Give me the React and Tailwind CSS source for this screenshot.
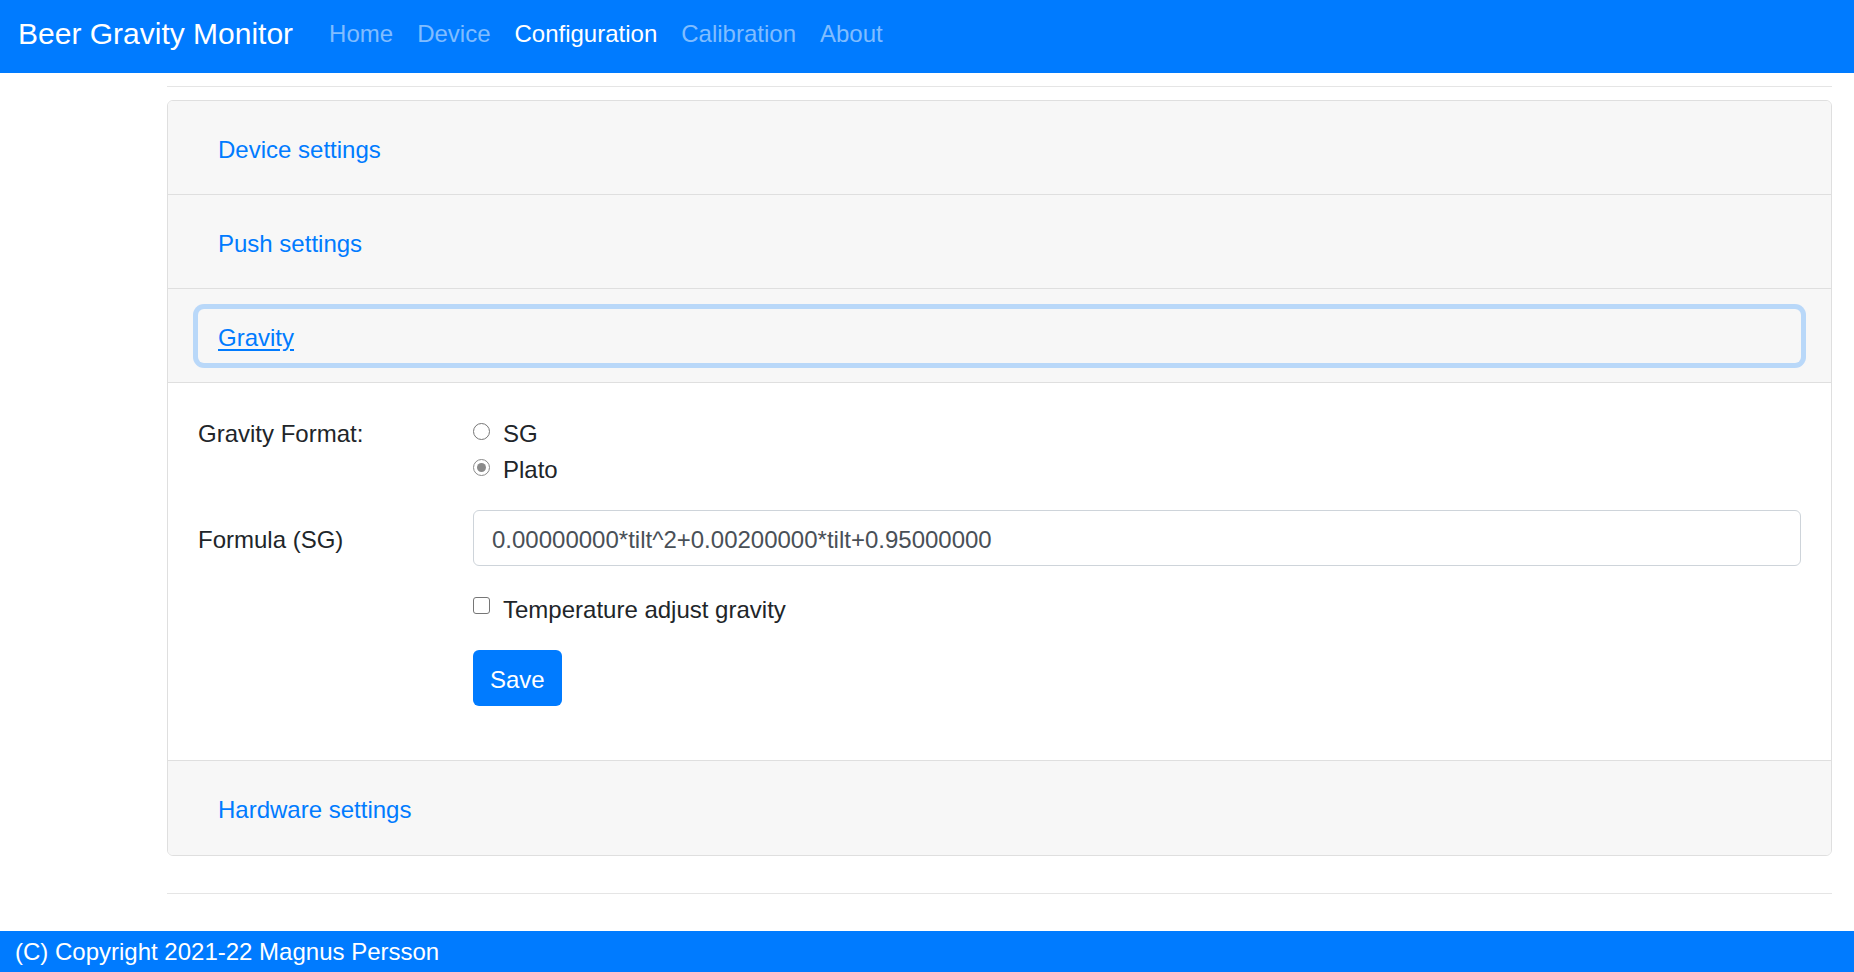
import { useState } from "react";

const SectionHeader = ({ title, active, onClick }) => {
    return (
        <div className="h-[94px] border-b border-[#dfdfdf] bg-[#f7f7f7] px-[30px] flex items-center">
            <button
                className={
                    active
                        ? "w-full h-[54px] pl-[20px] pr-[18px] pt-[4px] text-left text-[24px] leading-[36px] text-[#007bff] underline underline-offset-[3px] rounded-[6px] shadow-[0_0_0_5px_rgba(0,123,255,0.25)]"
                        : "w-full h-[54px] pl-[20px] pr-[18px] pt-[4px] text-left text-[24px] leading-[36px] text-[#007bff] rounded-[6px]"
                }
                onClick={onClick}
            >
                {title}
            </button>
        </div>
    );
};

const Radio = ({ checked, label, onClick }) => {
    return (
        <div className="flex items-center h-[36px] cursor-pointer" onClick={onClick}>
            <span
                className={
                    checked
                        ? "w-[17px] h-[17px] rounded-full border-[1.5px] border-[#8a8a8a] bg-white flex items-center justify-center -mt-[2px]"
                        : "w-[17px] h-[17px] rounded-full border border-[#767676] bg-white -mt-[2px]"
                }
            >
                {checked && <span className="w-[9px] h-[9px] rounded-full bg-[#8a8a8a]" />}
            </span>
            <span className="ml-[13px] translate-y-[2px]">{label}</span>
        </div>
    );
};

const App = () => {
    const [format, setFormat] = useState("Plato");
    const [tempAdjust, setTempAdjust] = useState(false);
    const [formula, setFormula] = useState("0.00000000*tilt^2+0.00200000*tilt+0.95000000");

    return (
        <div className="min-h-screen flex flex-col bg-white text-[#212529] font-['Liberation_Sans',Arial,sans-serif]">
            {/* Navbar */}
            <nav className="h-[73px] bg-[#007bff] flex items-center pl-[18px]">
                <span className="text-[30px] text-white mr-[24px] -mt-[6px]">Beer Gravity Monitor</span>
                <div className="flex text-[24px] -mt-[5px]">
                    <a className="px-[12px] text-[#80bdff]">Home</a>
                    <a className="px-[12px] text-[#80bdff]">Device</a>
                    <a className="px-[12px] text-white">Configuration</a>
                    <a className="px-[12px] text-[#80bdff]">Calibration</a>
                    <a className="px-[12px] text-[#80bdff]">About</a>
                </div>
            </nav>

            <div className="pl-[167px] pr-[22px]">
                <hr className="mt-[13px] mb-[13px] border-0 border-t border-[#e5e5e5]" />

                {/* Accordion */}
                <div className="border border-[#dfdfdf] rounded-[6px] overflow-hidden">
                    <SectionHeader title="Device settings" />
                    <SectionHeader title="Push settings" />
                    <SectionHeader title="Gravity" active />

                    <div className="h-[378px] border-b border-[#dfdfdf] bg-white px-[30px] pt-[31px] text-[24px] leading-[36px]">
                        <div className="grid grid-cols-[275px_1fr]">
                            <div className="h-[36px] translate-y-[2px]">Gravity Format:</div>
                            <div>
                                <Radio label="SG" checked={format === "SG"} onClick={() => setFormat("SG")} />
                                <Radio label="Plato" checked={format === "Plato"} onClick={() => setFormat("Plato")} />
                            </div>
                        </div>

                        <div className="grid grid-cols-[275px_1fr] items-center mt-[24px]">
                            <div className="translate-y-[2px]">Formula (SG)</div>
                            <input
                                className="h-[56px] w-full border border-[#ced4da] rounded-[6px] px-[18px] pt-[3px] text-[#495057] text-[24px] outline-none"
                                value={formula}
                                onChange={(e) => setFormula(e.target.value)}
                            />
                        </div>

                        <div className="grid grid-cols-[275px_1fr] mt-[24px]">
                            <div></div>
                            <div className="flex items-center h-[36px] cursor-pointer" onClick={() => setTempAdjust(!tempAdjust)}>
                                <span className="w-[17px] h-[17px] rounded-[3px] border-[1.5px] border-[#767676] bg-white -mt-[5px]" />
                                <span className="ml-[13px] translate-y-[2px]">Temperature adjust gravity</span>
                            </div>
                        </div>

                        <div className="grid grid-cols-[275px_1fr] mt-[24px]">
                            <div></div>
                            <div>
                                <button className="h-[56px] px-[17px] pt-[3px] bg-[#007bff] text-white text-[24px] rounded-[6px]">Save</button>
                            </div>
                        </div>
                    </div>

                    <div className="h-[94px] bg-[#f7f7f7] px-[30px] flex items-center">
                        <button className="w-full h-[54px] pl-[20px] pr-[18px] pt-[4px] text-left text-[24px] leading-[36px] text-[#007bff]">
                            Hardware settings
                        </button>
                    </div>
                </div>

                <hr className="mt-[37px] border-0 border-t border-[#e5e5e5]" />
            </div>

            <footer className="mt-auto h-[41px] bg-[#007bff] text-white text-[24px] flex items-center pl-[15px]">
                (C) Copyright 2021-22 Magnus Persson
            </footer>
        </div>
    );
};

export default App;
